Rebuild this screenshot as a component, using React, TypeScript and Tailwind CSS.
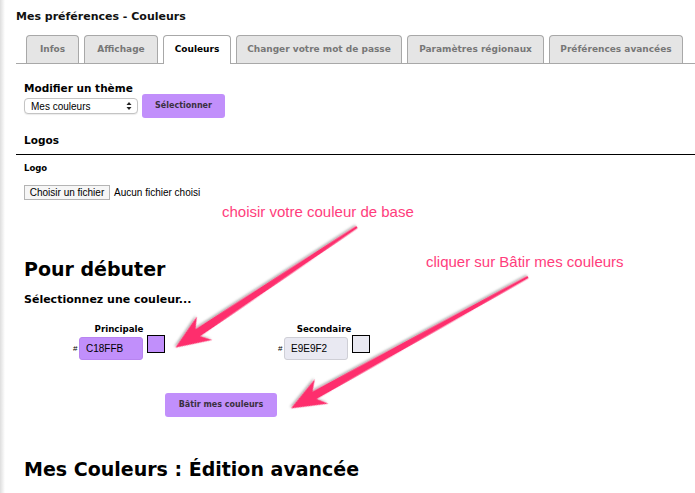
import React from "react";

const verdana = { fontFamily: '"DejaVu Sans", Verdana, sans-serif' };
const arial = { fontFamily: '"Liberation Sans", Arial, sans-serif' };

function Arrow({ x, y, angle, len }: { x: number; y: number; angle: number; len: number }) {
  const L = len;
  const pts = [
    [0, -1.3],
    [L - 27, -4.2],
    [L - 35, -14],
    [L, 0],
    [L - 35, 14],
    [L - 27, 4.2],
    [0, 1.3],
  ]
    .map((p) => p.join(","))
    .join(" ");
  return (
    <g transform={`translate(${x} ${y}) rotate(${angle})`} filter="url(#shadow)">
      <polygon points={pts} fill="#fe2f6d" strokeLinejoin="round" />
    </g>
  );
}

function Tab({ label, w, active }: { label: string; w: number; active?: boolean }) {
  return (
    <div
      className={
        active
          ? "-mb-px flex h-[29px] shrink-0 items-center justify-center whitespace-nowrap rounded-t-[4px] border border-b-0 border-[#a8a8a8] bg-white pb-px text-[9px] font-bold text-black"
          : "flex h-[28px] shrink-0 items-center justify-center whitespace-nowrap rounded-t-[4px] border border-b-0 border-[#a8a8a8] bg-[#e5e5e5] text-[9px] font-bold text-[#777]"
      }
      style={{ width: w }}
    >
      {label}
    </div>
  );
}

function ColorGroup({
  label,
  value,
  bg,
  border,
}: {
  label: string;
  value: string;
  bg: string;
  border: string;
}) {
  return (
    <div className="flex w-[92px] flex-col">
      <div className="whitespace-nowrap text-center text-[8.7px] font-bold leading-[13px] text-black">{label}</div>
      <div className="mt-[1px] flex items-start">
        <span className="mt-[7px] w-[6px] text-[8px] leading-[10px] text-black" style={arial}>
          #
        </span>
        <div
          className={`flex h-[23px] w-[64px] items-center rounded-[3px] border pl-[6px] text-[10px] text-black ${bg} ${border}`}
          style={arial}
        >
          {value}
        </div>
        <div className={`-mt-[2px] ml-[4px] h-[18px] w-[18px] border border-black ${bg}`} />
      </div>
    </div>
  );
}

export default function App() {
  return (
    <div className="relative h-[493px] w-[695px] overflow-hidden bg-white text-black" style={verdana}>
      <div className="absolute left-0 top-0 h-full w-[5px] bg-gradient-to-r from-[#dedede] to-white" />

      <div className="pl-[16px]">
        <h1 className="whitespace-nowrap pt-[9px] text-[11px] font-bold leading-[16px] text-[#111]">
          Mes préférences - Couleurs
        </h1>

        <div className="mt-[10px] flex h-[29px] items-end gap-[5px] border-b border-[#a8a8a8] pl-[10px]">
          <Tab label="Infos" w={53} />
          <Tab label="Affichage" w={74} />
          <Tab label="Couleurs" w={68} active />
          <Tab label="Changer votre mot de passe" w={166} />
          <Tab label="Paramètres régionaux" w={137} />
          <Tab label="Préférences avancées" w={134} />
        </div>

        <div className="pl-[8px]">
          <div className="mt-[17px] whitespace-nowrap text-[10.5px] font-bold leading-[14px]">Modifier un thème</div>
          <div className="-mt-[1px] flex items-center gap-[4px]">
            <div
              className="flex h-[16px] w-[114px] items-center justify-between rounded-[4px] border border-[#c4c4c4] bg-white pl-[6px] pr-[5px] text-[10px] text-black shadow-[0_1px_1px_rgba(0,0,0,0.08)]"
              style={arial}
            >
              <span className="whitespace-nowrap">Mes couleurs</span>
              <svg width="6" height="10" viewBox="0 0 6 10">
                <path d="M3 1 L5.5 4 L0.5 4 Z" fill="#222" />
                <path d="M3 9 L5.5 6 L0.5 6 Z" fill="#222" />
              </svg>
            </div>
            <div className="flex h-[24px] w-[83px] items-center justify-center whitespace-nowrap rounded-[3px] bg-[#c18ffb] text-[8px] font-bold text-[#3a3040]">
              Sélectionner
            </div>
          </div>
        </div>

        <div className="mt-[14px] whitespace-nowrap border-b border-black pb-[6px] pl-[8px] text-[10.5px] font-bold leading-[16px]">
          Logos
        </div>

        <div className="pl-[8px]">
          <div className="mt-[7px] text-[8.5px] font-bold leading-[13px]">Logo</div>
          <div className="mt-[10px] flex items-center gap-[4px] text-[10px] text-black" style={arial}>
            <div className="flex h-[15px] w-[86px] items-center justify-center whitespace-nowrap border border-[#b4b4b4] bg-[#f6f6f6]">
              Choisir un fichier
            </div>
            <span className="whitespace-nowrap">Aucun fichier choisi</span>
          </div>

          <h2 className="mt-[57px] whitespace-nowrap text-[19px] font-bold leading-[24px]">Pour débuter</h2>
          <div className="mt-[11px] whitespace-nowrap text-[11px] font-bold leading-[16px]">Sélectionnez une couleur...</div>

          <div className="ml-[49px] mt-[15px] flex gap-[113px]">
            <ColorGroup label="Principale" value="C18FFB" bg="bg-[#c18ffb]" border="border-[#b884f0]" />
            <ColorGroup label="Secondaire" value="E9E9F2" bg="bg-[#e9e9f2]" border="border-[#cfcfd6]" />
          </div>

          <div className="ml-[141px] mt-[33px] flex h-[24px] w-[112px] items-center justify-center whitespace-nowrap rounded-[3px] bg-[#c18ffb] text-[8px] font-bold text-[#3a3040]">
            Bâtir mes couleurs
          </div>

          <h2 className="mt-[40px] whitespace-nowrap text-[19px] font-bold leading-[24px]">
            Mes Couleurs : Édition avancée
          </h2>
        </div>
      </div>

      <div className="absolute left-[222px] top-[203px] whitespace-nowrap text-[15px] leading-[18px] text-[#ff3d7c]" style={arial}>
        choisir votre couleur de base
      </div>
      <div className="absolute left-[426px] top-[253px] whitespace-nowrap text-[15px] leading-[18px] text-[#ff3d7c]" style={arial}>
        cliquer sur Bâtir mes couleurs
      </div>

      <svg className="pointer-events-none absolute left-0 top-0" width="695" height="493">
        <defs>
          <filter id="shadow" x="-20%" y="-20%" width="140%" height="140%">
            <feDropShadow dx="0.5" dy="1.5" stdDeviation="1.3" floodColor="#000" floodOpacity="0.35" />
          </filter>
        </defs>
        <Arrow x={357} y={227} angle={146.4} len={218} />
        <Arrow x={528} y={277} angle={151} len={271} />
      </svg>
    </div>
  );
}
